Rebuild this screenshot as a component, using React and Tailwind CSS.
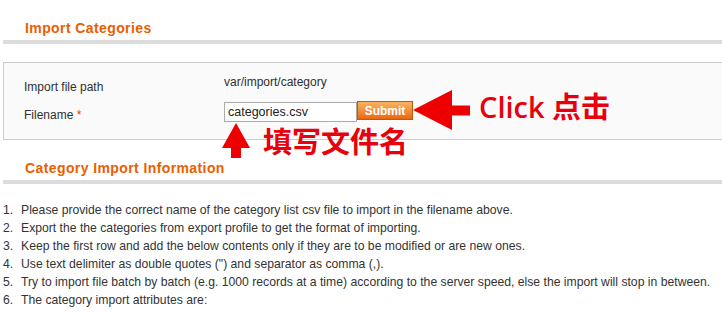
export default function App() {
  const items = [
    "Please provide the correct name of the category list csv file to import in the filename above.",
    "Export the the categories from export profile to get the format of importing.",
    "Keep the first row and add the below contents only if they are to be modified or are new ones.",
    'Use text delimiter as double quotes (") and separator as comma (,).',
    "Try to import file batch by batch (e.g. 1000 records at a time) according to the server speed, else the import will stop in between.",
    "The category import attributes are:",
  ];
  return (
    <div className="relative w-[722px] h-[314px] overflow-hidden bg-white text-[#2f2f2f] font-['Liberation_Sans',Arial,sans-serif]">
      <div className="pt-[20px]">
        <h3 className="pl-[25px] text-[14px] leading-[16px] tracking-[0.4px] font-bold text-[#eb5e00]">Import Categories</h3>
        <div className="mt-[4px] ml-[3px] h-[4px] bg-[#dcdcdc]" />
        <div className="mt-[18px] ml-[3px] h-[78px] border border-r-0 border-[#cccccc] bg-[#fafafa] pl-[20px] text-[12px] leading-[18px]">
          <div className="flex h-[39px]">
            <div className="w-[200px] pt-[15px]">Import file path</div>
            <div className="pt-[10px]">var/import/category</div>
          </div>
          <div className="flex items-start">
            <div className="w-[200px] pt-[4px]">
              Filename <span className="text-[#eb340a]">*</span>
            </div>
            <div className="h-[20px] w-[133px] border border-[#aaaaaa] bg-white pl-[3px] text-[12.5px] leading-[18px] text-[#222]">
              categories.csv
            </div>
            <div className="-mt-px flex h-[19px] w-[56px] items-center justify-center border border-[#bf5a0a] bg-gradient-to-b from-[#fbb25c] to-[#e8680c] text-[12px] font-bold text-white">
              Submit
            </div>
          </div>
        </div>
        <h3 className="mt-[20px] pl-[25px] text-[14px] leading-[16px] tracking-[0.4px] font-bold text-[#eb5e00]">Category Import Information</h3>
        <div className="mt-[4px] ml-[3px] h-[4px] bg-[#dcdcdc]" />
        <ol className="mt-[17px] pl-[3px] text-[12.2px] leading-[18px] text-[#333]">
          {items.map((t, i) => (
            <li key={i} className="flex whitespace-nowrap">
              <span className="w-[18px] shrink-0">{i + 1}.</span>
              <span>{t}</span>
            </li>
          ))}
        </ol>
      </div>

      <svg className="pointer-events-none absolute left-0 top-0" width="722" height="314" viewBox="0 0 722 314">
        <polygon points="413,110 452,90 452,105.5 470,105.5 470,115.5 452,115.5 452,130" fill="#ee0000" />
        <polygon points="236,123 250,148 241,148 241,158 231,158 231,148 222,148" fill="#ee0000" />
      </svg>
      <div className="absolute left-[479px] top-[92px] whitespace-nowrap text-[29px] leading-none font-semibold text-[#e8000c] font-['Open_Sans','Noto_Sans_CJK_SC',sans-serif]">
        Click 点击
      </div>
      <div className="absolute left-[263px] top-[126px] whitespace-nowrap text-[29px] leading-none font-semibold text-[#e8000c] font-['Noto_Sans_CJK_SC',sans-serif]">
        填写文件名
      </div>
    </div>
  );
}
